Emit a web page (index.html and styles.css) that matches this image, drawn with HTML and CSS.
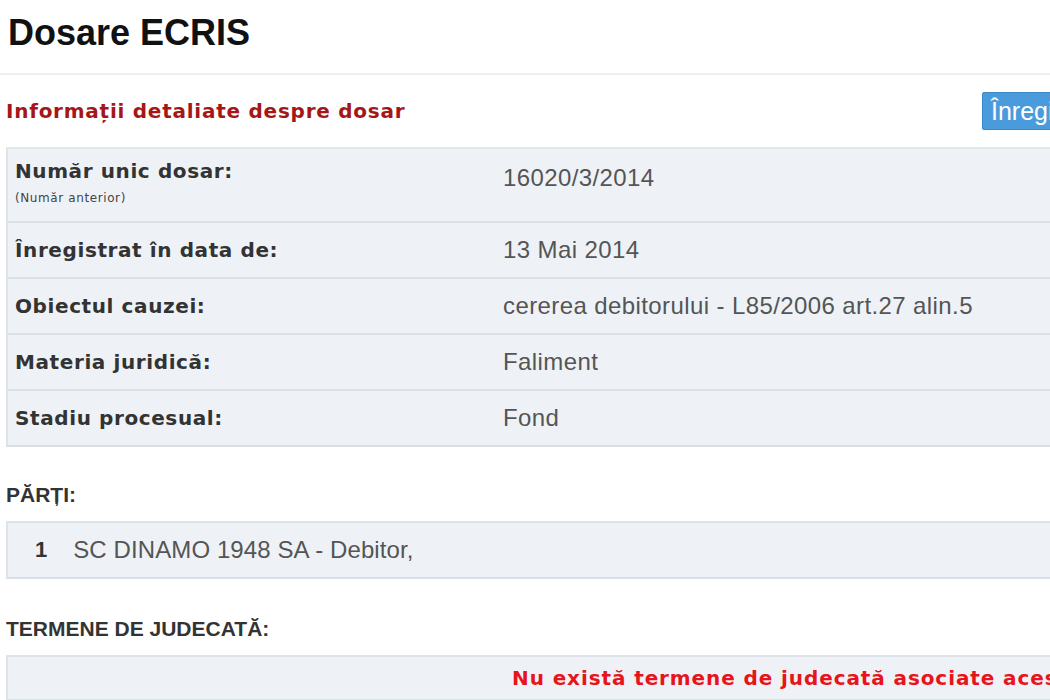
FILE: index.html
```html
<!DOCTYPE html>
<html lang="ro">
<head>
<meta charset="utf-8">
<title>Dosare ECRIS</title>
<link rel="stylesheet" href="styles.css">
</head>
<body>
<div class="page">
  <h1 class="title">Dosare ECRIS</h1>
  <div class="rule"></div>
  <div class="subhead">
    <h2 class="subhead-title">Informații detaliate despre dosar</h2>
    <button class="btn">Înregistrare notificări</button>
  </div>
  <table class="info">
    <tr class="row-first">
      <th class="label">Număr unic dosar:<span class="note">(Număr anterior)</span></th>
      <td class="value value-top">16020/3/2014</td>
    </tr>
    <tr>
      <th class="label">Înregistrat în data de:</th>
      <td class="value">13 Mai 2014</td>
    </tr>
    <tr>
      <th class="label">Obiectul cauzei:</th>
      <td class="value">cererea debitorului - L85/2006 art.27 alin.5</td>
    </tr>
    <tr>
      <th class="label">Materia juridică:</th>
      <td class="value">Faliment</td>
    </tr>
    <tr>
      <th class="label">Stadiu procesual:</th>
      <td class="value">Fond</td>
    </tr>
  </table>

  <h3 class="section">PĂRȚI:</h3>
  <div class="box parties">
    <span class="num">1</span>
    <span class="party">SC DINAMO 1948 SA - Debitor,</span>
  </div>

  <h3 class="section section-terms">TERMENE DE JUDECATĂ:</h3>
  <div class="box empty">
    <span class="empty-text">Nu există termene de judecată asociate acestui dosar.</span>
  </div>
</div>
</body>
</html>
```

FILE: styles.css
```css
html, body {
  margin: 0;
  padding: 0;
  background: #ffffff;
  overflow: hidden;
}

.page {
  width: 1150px;
  padding-left: 6px;
  font-family: "Liberation Sans", Arial, sans-serif;
}

.title {
  margin: 0;
  padding: 13px 0 0 2px;
  height: 47px;
  font-size: 36px;
  font-weight: bold;
  color: #111111;
  line-height: 40px;
}

.rule {
  margin-left: -6px;
  height: 2px;
  background: #efefef;
  margin-top: 13px;
}

.subhead {
  display: flex;
  align-items: center;
  height: 72px;
}

.subhead-title {
  flex: 0 0 976px;
  margin: 0;
  font-family: "DejaVu Sans", Verdana, sans-serif;
  font-weight: bold;
  font-size: 20px;
  color: #a51717;
  letter-spacing: 0.75px;
}

.btn {
  height: 38px;
  padding: 0 8px;
  border: 1px solid #3a88c8;
  border-radius: 2px;
  background: #4a9bdc;
  color: #ffffff;
  font-family: "Liberation Sans", Arial, sans-serif;
  font-size: 25px;
  white-space: nowrap;
}

.info {
  width: 100%;
  border-collapse: collapse;
  background: #eef2f7;
  border-left: 2px solid #dde3e9;
  border-top: 2px solid #e2e7ec;
}

.info tr {
  border-bottom: 2px solid #d9e0e6;
}

.label {
  width: 478px;
  padding: 0 0 0 7px;
  height: 54px;
  text-align: left;
  vertical-align: middle;
  font-family: "DejaVu Sans", Verdana, sans-serif;
  font-weight: bold;
  font-size: 20px;
  letter-spacing: 0.6px;
  color: #333333;
}

.row-first .label {
  height: 74px;
  vertical-align: top;
  padding-top: 10px;
  box-sizing: border-box;
}

.note {
  display: block;
  margin-top: 8px;
  font-size: 12px;
  font-weight: normal;
  letter-spacing: 0.6px;
  color: #444444;
}

.value {
  padding: 0 0 0 10px;
  vertical-align: middle;
  font-size: 24px;
  color: #555555;
  letter-spacing: 0.4px;
}

.value-top {
  vertical-align: top;
  padding-top: 15px;
}

.section {
  margin: 0;
  padding: 36px 0 0 0;
  height: 38px;
  font-size: 21px;
  font-weight: bold;
  color: #333333;
  line-height: 24px;
}

.section-terms {
  padding-top: 38px;
}

.box {
  display: flex;
  align-items: center;
  background: #eef2f7;
  border-left: 2px solid #dde3e9;
  border-top: 2px solid #dde3e9;
  border-bottom: 2px solid #d9e0e6;
  box-sizing: border-box;
}

.parties {
  height: 58px;
  gap: 26px;
  padding-left: 27px;
}

.num {
  font-size: 22px;
  font-weight: bold;
  color: #333333;
}

.party {
  font-size: 24px;
  color: #555555;
  letter-spacing: 0.1px;
}

.empty {
  height: 46px;
  padding-left: 504px;
}

.empty-text {
  font-family: "DejaVu Sans", Verdana, sans-serif;
  font-weight: bold;
  font-size: 20px;
  letter-spacing: 0.9px;
  color: #e8141b;
  white-space: nowrap;
}
```
